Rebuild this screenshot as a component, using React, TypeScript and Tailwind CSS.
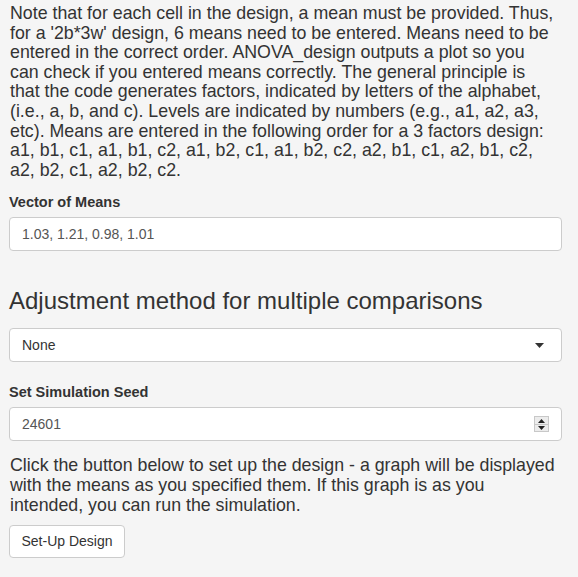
export default function App() {
  return (
    <div className="min-h-[577px] w-[578px] bg-[#f5f5f5] text-[#333] font-['Liberation_Sans',Arial,sans-serif] px-[9px] pt-[4px]">
      <p className="text-[17.8px] leading-[19.6px] whitespace-nowrap pl-[1px]">
        Note that for each cell in the design, a mean must be provided. Thus,
        <br />
        for a '2b*3w' design, 6 means need to be entered. Means need to be
        <br />
        entered in the correct order. ANOVA_design outputs a plot so you
        <br />
        can check if you entered means correctly. The general principle is
        <br />
        that the code generates factors, indicated by letters of the alphabet,
        <br />
        (i.e., a, b, and c). Levels are indicated by numbers (e.g., a1, a2, a3,
        <br />
        etc). Means are entered in the following order for a 3 factors design:
        <br />
        a1, b1, c1, a1, b1, c2, a1, b2, c1, a1, b2, c2, a2, b1, c1, a2, b1, c2,
        <br />
        a2, b2, c1, a2, b2, c2.
      </p>

      <div className="mt-[13px]">
        <label className="block text-[14.5px] font-bold leading-[18px]">Vector of Means</label>
        <div className="mt-[6px] h-[34px] w-[553px] bg-white border border-[#ccc] rounded-[4px] flex items-center px-[12px] text-[14px] text-[#555]">
          1.03, 1.21, 0.98, 1.01
        </div>
      </div>

      <h3 className="mt-[36px] text-[24px] leading-[28px] font-normal">Adjustment method for multiple comparisons</h3>

      <div className="mt-[13px] h-[34px] w-[553px] bg-white border border-[#ccc] rounded-[4px] flex items-center justify-between pl-[12px] pr-[17px] text-[14px] text-[#333]">
        <span>None</span>
        <svg width="9" height="5" viewBox="0 0 9 5">
          <path d="M0 0 L9 0 L4.5 5 Z" fill="#333" />
        </svg>
      </div>

      <div className="mt-[21px]">
        <label className="block text-[14.5px] font-bold leading-[18px]">Set Simulation Seed</label>
        <div className="mt-[6px] h-[34px] w-[553px] bg-white border border-[#ccc] rounded-[4px] flex items-center justify-between pl-[12px] pr-[12px] text-[14px] text-[#555]">
          <span>24601</span>
          <div className="flex flex-col w-[15px] h-[16px] border border-[#c8c8c8] bg-[#ececec]">
            <div className="flex-1 flex items-center justify-center border-b border-[#c8c8c8]">
              <svg width="7" height="4" viewBox="0 0 7 4"><path d="M0 4 L7 4 L3.5 0 Z" fill="#222" /></svg>
            </div>
            <div className="flex-1 flex items-center justify-center">
              <svg width="7" height="4" viewBox="0 0 7 4"><path d="M0 0 L7 0 L3.5 4 Z" fill="#222" /></svg>
            </div>
          </div>
        </div>
      </div>

      <p className="mt-[15px] text-[17.8px] leading-[19.6px] whitespace-nowrap pl-[1px]">
        Click the button below to set up the design - a graph will be displayed
        <br />
        with the means as you specified them. If this graph is as you
        <br />
        intended, you can run the simulation.
      </p>

      <button className="mt-[10px] h-[33px] w-[116px] bg-white border border-[#ccc] rounded-[4px] text-[14px] text-[#333]">
        Set-Up Design
      </button>
    </div>
  );
}
